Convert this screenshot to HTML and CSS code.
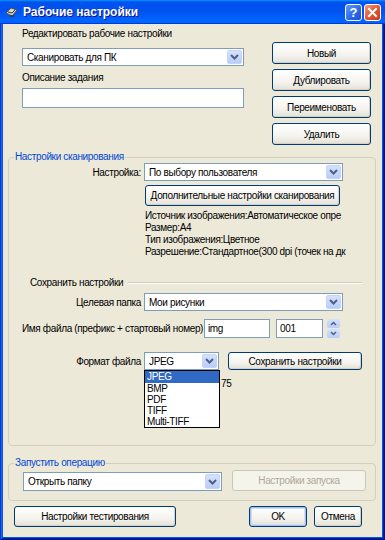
FILE: index.html
```html
<!DOCTYPE html>
<html lang="ru">

<head>
  <meta charset="UTF-8">
  <title>Рабочие настройки</title>
  <link rel="stylesheet" href="styles.css">
</head>

<body>
  <div class="window">
    <div class="title-bar">
      <svg class="title-icon" width="13" height="12" viewBox="0 0 13 12">
        <path d="M1 7 L6 2 L12 4 L7 10 Z" fill="#d8d8d0" stroke="#505050" stroke-width="1"/>
        <path d="M3 6 L7 7 L10 4" fill="none" stroke="#303030" stroke-width="1"/>
        <rect x="5" y="9" width="4" height="2" fill="#404040"/>
      </svg>
      <div class="title-text">Рабочие настройки</div>
      <div class="title-buttons">
        <div class="tb-btn tb-help">?</div>
        <div class="tb-btn tb-close">
          <svg width="11" height="11" viewBox="0 0 11 11">
            <path d="M2 2 L9 9 M9 2 L2 9" stroke="#fff" stroke-width="2" stroke-linecap="square"/>
          </svg>
        </div>
      </div>
    </div>

    <div class="content">
      <!-- Job settings selector -->
      <div class="top">
        <div class="top-left">
          <div class="label">Редактировать рабочие настройки</div>
          <div class="combo combo-job">
            <span class="combo-text">Сканировать для ПК</span>
            <span class="combo-arrow"><svg width="9" height="6" viewBox="0 0 9 6"><path d="M1 1 L4.5 4.5 L8 1" fill="none" stroke="#4d6185" stroke-width="2"/></svg></span>
          </div>
          <div class="label label-desc">Описание задания</div>
          <div class="textbox textbox-desc"></div>
        </div>
        <div class="top-buttons">
          <button class="btn">Новый</button>
          <button class="btn">Дублировать</button>
          <button class="btn">Переименовать</button>
          <button class="btn">Удалить</button>
        </div>
      </div>

      <!-- Scan settings -->
      <fieldset class="group group-scan">
        <legend>Настройки сканирования</legend>
        <div class="row row-preset">
          <span class="row-label">Настройка:</span>
          <div class="combo combo-preset">
            <span class="combo-text">По выбору пользователя</span>
            <span class="combo-arrow"><svg width="9" height="6" viewBox="0 0 9 6"><path d="M1 1 L4.5 4.5 L8 1" fill="none" stroke="#4d6185" stroke-width="2"/></svg></span>
          </div>
        </div>
        <button class="btn btn-advanced">Дополнительные настройки сканирования</button>
        <div class="info">
          <div>Источник изображения:Автоматическое опре</div>
          <div>Размер:A4</div>
          <div>Тип изображения:Цветное</div>
          <div>Разрешение:Стандартное(300 dpi (точек на дк</div>
        </div>

        <div class="save-head">
          <span>Сохранить настройки</span>
          <span class="save-line"></span>
        </div>
        <div class="row row-folder">
          <span class="row-label">Целевая папка</span>
          <div class="combo combo-folder">
            <span class="combo-text">Мои рисунки</span>
            <span class="combo-arrow"><svg width="9" height="6" viewBox="0 0 9 6"><path d="M1 1 L4.5 4.5 L8 1" fill="none" stroke="#4d6185" stroke-width="2"/></svg></span>
          </div>
        </div>
        <div class="row row-name">
          <span class="name-label">Имя файла (префикс + стартовый номер)</span>
          <div class="textbox textbox-prefix">img</div>
          <div class="textbox textbox-number">001</div>
          <div class="spin">
            <span class="spin-btn"><svg width="7" height="5" viewBox="0 0 7 5"><path d="M1 4 L3.5 1.5 L6 4" fill="none" stroke="#4d6185" stroke-width="1.5"/></svg></span>
            <span class="spin-btn"><svg width="7" height="5" viewBox="0 0 7 5"><path d="M1 1 L3.5 3.5 L6 1" fill="none" stroke="#4d6185" stroke-width="1.5"/></svg></span>
          </div>
        </div>
        <div class="row row-format">
          <span class="row-label">Формат файла</span>
          <div class="format-wrap">
            <div class="combo combo-format">
              <span class="combo-text">JPEG</span>
              <span class="combo-arrow"><svg width="9" height="6" viewBox="0 0 9 6"><path d="M1 1 L4.5 4.5 L8 1" fill="none" stroke="#4d6185" stroke-width="2"/></svg></span>
            </div>
            <div class="format-list">
              <div class="format-item selected">JPEG</div>
              <div class="format-item">BMP</div>
              <div class="format-item">PDF</div>
              <div class="format-item">TIFF</div>
              <div class="format-item">Multi-TIFF</div>
            </div>
          </div>
          <button class="btn btn-save">Сохранить настройки</button>
        </div>
        <div class="quality">75</div>
      </fieldset>

      <!-- Run operation -->
      <fieldset class="group group-run">
        <legend>Запустить операцию</legend>
        <div class="row row-run">
          <div class="combo combo-run">
            <span class="combo-text">Открыть папку</span>
            <span class="combo-arrow"><svg width="9" height="6" viewBox="0 0 9 6"><path d="M1 1 L4.5 4.5 L8 1" fill="none" stroke="#4d6185" stroke-width="2"/></svg></span>
          </div>
          <button class="btn btn-disabled btn-run">Настройки запуска</button>
        </div>
      </fieldset>

      <div class="bottom">
        <button class="btn btn-test">Настройки тестирования</button>
        <div class="bottom-right">
          <button class="btn btn-default btn-ok">OK</button>
          <button class="btn btn-cancel">Отмена</button>
        </div>
      </div>
    </div>
  </div>
</body>

</html>
```

FILE: styles.css
```css
* {
  margin: 0;
  padding: 0;
  box-sizing: border-box;
}

body {
  width: 385px;
  height: 540px;
  overflow: hidden;
  font-family: "Liberation Sans", Arial, sans-serif;
  font-size: 10px;
  letter-spacing: -0.35px;
  color: #000;
}

.window {
  width: 385px;
  height: 540px;
  display: flex;
  flex-direction: column;
  padding: 0 3px 3px;
  background-color: #0855dd;
  box-shadow: inset 1px 0 #0831d9, inset -1px -1px #00138c, inset 2px 0 #166aee, inset -2px -2px #001ea0;
}

/* Title bar */
.title-bar {
  height: 24px;
  margin: 0 -3px;
  padding: 0 4px 0 5px;
  display: flex;
  align-items: center;
  background: linear-gradient(180deg, #0997ff, #0053ee 8%, #0050ee 40%, #0066ff 88%, #0066ff 93%, #005bff 95%, #003dd7 96%, #003dd7);
}

.title-icon {
  margin-right: 5px;
}

.title-text {
  flex: 1;
  color: #fff;
  font-size: 12px;
  font-weight: bold;
  letter-spacing: 0;
  text-shadow: 1px 1px #0f1089;
}

.title-buttons {
  display: flex;
  gap: 2px;
}

.tb-btn {
  width: 17px;
  height: 17px;
  border: 1px solid #fff;
  border-radius: 3px;
  display: flex;
  align-items: center;
  justify-content: center;
  color: #fff;
  font-weight: bold;
  font-size: 13px;
  letter-spacing: 0;
}

.tb-help {
  background: linear-gradient(135deg, #5e9bff, #2b66e8 60%, #1c50d0);
}

.tb-close {
  background: linear-gradient(135deg, #f29a78, #e2532d 55%, #c73a12);
}

/* Dialog body */
.content {
  flex: 1;
  background-color: #ece9d8;
  display: flex;
  flex-direction: column;
  padding: 0 6px 0 5px;
}

.top {
  height: 127px;
  display: flex;
  justify-content: space-between;
  padding: 3px 5px 0 14px;
}

.top-left {
  width: 222px;
}

.label {
  line-height: 14px;
}

.label-desc {
  margin-top: 5px;
}

.combo {
  height: 18px;
  display: flex;
  align-items: center;
  background-color: #fff;
  border: 1px solid #7f9db9;
  padding: 1px;
}

.combo-text {
  flex: 1;
  padding-left: 3px;
  white-space: nowrap;
  overflow: hidden;
}

.combo-arrow {
  width: 15px;
  height: 100%;
  display: flex;
  align-items: center;
  justify-content: center;
  border-radius: 2px;
  background: linear-gradient(180deg, #d6e2fd, #b9cdf8);
  border: 1px solid #c3d3fd;
}

.combo-job {
  margin-top: 7px;
}

.textbox {
  height: 19px;
  background-color: #fff;
  border: 1px solid #7f9db9;
  padding: 2px 3px;
  line-height: 13px;
}

.textbox-desc {
  margin-top: 3px;
  height: 20px;
}

.top-buttons {
  display: flex;
  flex-direction: column;
  gap: 5px;
  margin-top: 15px;
}

.btn {
  font-family: inherit;
  font-size: 10px;
  letter-spacing: -0.35px;
  color: #000;
  height: 22px;
  width: 99px;
  border: 1px solid #003c74;
  border-radius: 3px;
  background: linear-gradient(180deg, #ffffff, #f4f3ee 60%, #e3e1d6);
  box-shadow: inset -1px -1px #d6d0c5;
  white-space: nowrap;
}

.btn-default {
  box-shadow: inset 0 0 0 1px #a9c1ed, inset 0 0 0 2px #cfdcf5;
}

.btn-disabled {
  color: #aca899;
  border-color: #c9c7ba;
  background: #f5f4ea;
  box-shadow: none;
}

/* Group boxes */
.group {
  border: 1px solid #d0d0bf;
  border-radius: 4px;
}

.group legend {
  margin-left: 5px;
  padding: 0 1px;
  color: #0046d5;
  line-height: 12px;
}

.group-scan {
  padding-bottom: 55px;
}

.row {
  display: flex;
  align-items: center;
}

.row-label {
  width: 132px;
  margin-right: 3px;
  text-align: right;
}

.combo-preset,
.combo-folder {
  width: 199px;
}

.btn-advanced {
  width: 195px;
  height: 21px;
  margin: 4px 0 0 136px;
}

.info {
  width: 197px;
  margin: 4px 0 0 136px;
  line-height: 12px;
  white-space: nowrap;
}

.save-head {
  display: flex;
  align-items: center;
  margin: 18px 13px 0 21px;
  line-height: 13px;
}

.save-line {
  flex: 1;
  margin-left: 5px;
  border-top: 1px solid #d0d0bf;
  border-bottom: 1px solid #fff;
}

.row-folder {
  margin-top: 4px;
}

.row-name {
  margin: 8px 0 0 13px;
}

.name-label {
  width: 182px;
  white-space: nowrap;
}

.textbox-prefix {
  width: 66px;
}

.textbox-number {
  width: 47px;
  margin-left: 6px;
}

.spin {
  margin-left: 4px;
  display: flex;
  flex-direction: column;
  gap: 1px;
}

.spin-btn {
  width: 13px;
  height: 9px;
  display: flex;
  align-items: center;
  justify-content: center;
  border-radius: 2px;
  background: linear-gradient(180deg, #d6e2fd, #b9cdf8);
}

.row-format {
  margin-top: 14px;
}

.format-wrap {
  position: relative;
}

.combo-format {
  width: 75px;
}

.format-list {
  position: absolute;
  top: 18px;
  left: 0;
  width: 76px;
  background-color: #fff;
  border: 1px solid #000;
  z-index: 1;
}

.format-item {
  line-height: 11px;
  padding-left: 2px;
}

.format-item.selected {
  background-color: #316ac5;
  color: #fff;
  line-height: 12px;
}

.btn-save {
  width: 134px;
  height: 18px;
  margin-left: 9px;
}

.quality {
  margin: 8px 0 0 212px;
  line-height: 12px;
}

.group-run {
  margin-top: 11px;
  padding-bottom: 9px;
}

.row-run {
  margin: 1px 0 0 14px;
}

.combo-run {
  width: 199px;
  height: 19px;
  margin-top: 2px;
}

.btn-run {
  width: 134px;
  height: 21px;
  margin-left: 10px;
}

.bottom {
  display: flex;
  justify-content: space-between;
  margin: 5px 14px 0 6px;
}

.bottom-right {
  display: flex;
  gap: 7px;
}

.btn-test {
  width: 162px;
  height: 21px;
}

.btn-ok {
  width: 58px;
  height: 21px;
}

.btn-cancel {
  width: 48px;
  height: 21px;
}
```
